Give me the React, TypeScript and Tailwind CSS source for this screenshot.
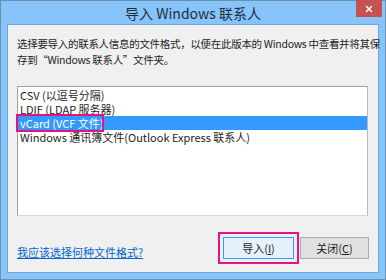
import { X } from "lucide-react";

const items = [
  "CSV (以逗号分隔)",
  "LDIF (LDAP 服务器)",
  "vCard (VCF 文件)",
  "Windows 通讯簿文件(Outlook Express 联系人)",
];

export default function App() {
  return (
    <div
      className="w-[386px] h-[280px] bg-[#86c4f9] border border-[#6c8fae] flex flex-col text-[11px] text-[#1e1e1e]"
      style={{ fontFamily: '"Microsoft YaHei", "Noto Sans CJK SC", "Noto Sans", sans-serif' }}
    >
      {/* title bar */}
      <div className="h-[23px] flex items-start relative">
        <div className="flex-1 text-center text-[14px] leading-[22px] text-[#1e2e3e] pt-[1px]">
          导入 Windows 联系人
        </div>
        <div className="absolute right-[3px] top-[-1px] w-[26px] h-[17px] bg-[#c75050] flex items-center justify-center">
          <X className="w-[10px] h-[10px] text-white" strokeWidth={3.5} />
        </div>
      </div>

      {/* body */}
      <div className="mx-[6px] mb-[6px] flex-1 bg-[#f0f0f0] border border-[#6fa9dc] flex flex-col px-[9px]">
        <p className="mt-[11px] leading-[16px] whitespace-nowrap text-[10.5px] tracking-[-0.3px]">
          选择要导入的联系人信息的文件格式，以便在此版本的 Windows 中查看并将其保
          <br />
          存到“Windows 联系人”文件夹。
        </p>

        <div className="mt-[18px] h-[130px] bg-white border border-[#a0a0a0] border-r-[#b8b8b8] border-b-[#d8d8d8] mr-[1px] pt-[1px]">
          {items.map((t, i) =>
            i === 2 ? (
              <div key={t} className="relative h-[14px] leading-[14px] bg-[#3399ff] text-white px-[2px] whitespace-nowrap">
                {t}
                <div className="absolute left-[-2px] top-[-2px] w-[88px] h-[18px] border-2 border-[#e5127f]" />
              </div>
            ) : (
              <div key={t} className="h-[14px] leading-[14px] px-[2px] whitespace-nowrap">
                {t}
              </div>
            )
          )}
        </div>

        <div className="flex-1" />

        <div className="flex items-end justify-between mb-[8px]">
          <a className="mb-[5px] text-[#0066cc] underline leading-[14px]">
            我应该选择何种文件格式?
          </a>
          <div className="flex items-center">
            <div className="border-2 border-[#e5127f] p-[3px]">
              <div className="w-[71px] h-[22px] bg-[#e5f1fb] border border-[#3399ff] flex items-center justify-center">
                <span className="leading-none">
                  导入(<span className="underline">I</span>)
                </span>
              </div>
            </div>
            <div className="ml-[1px] w-[69px] h-[22px] bg-[#e1e1e1] border border-[#adadad] flex items-center justify-center">
              <span className="leading-none">
                关闭(<span className="underline">C</span>)
              </span>
            </div>
          </div>
        </div>
      </div>
    </div>
  );
}
